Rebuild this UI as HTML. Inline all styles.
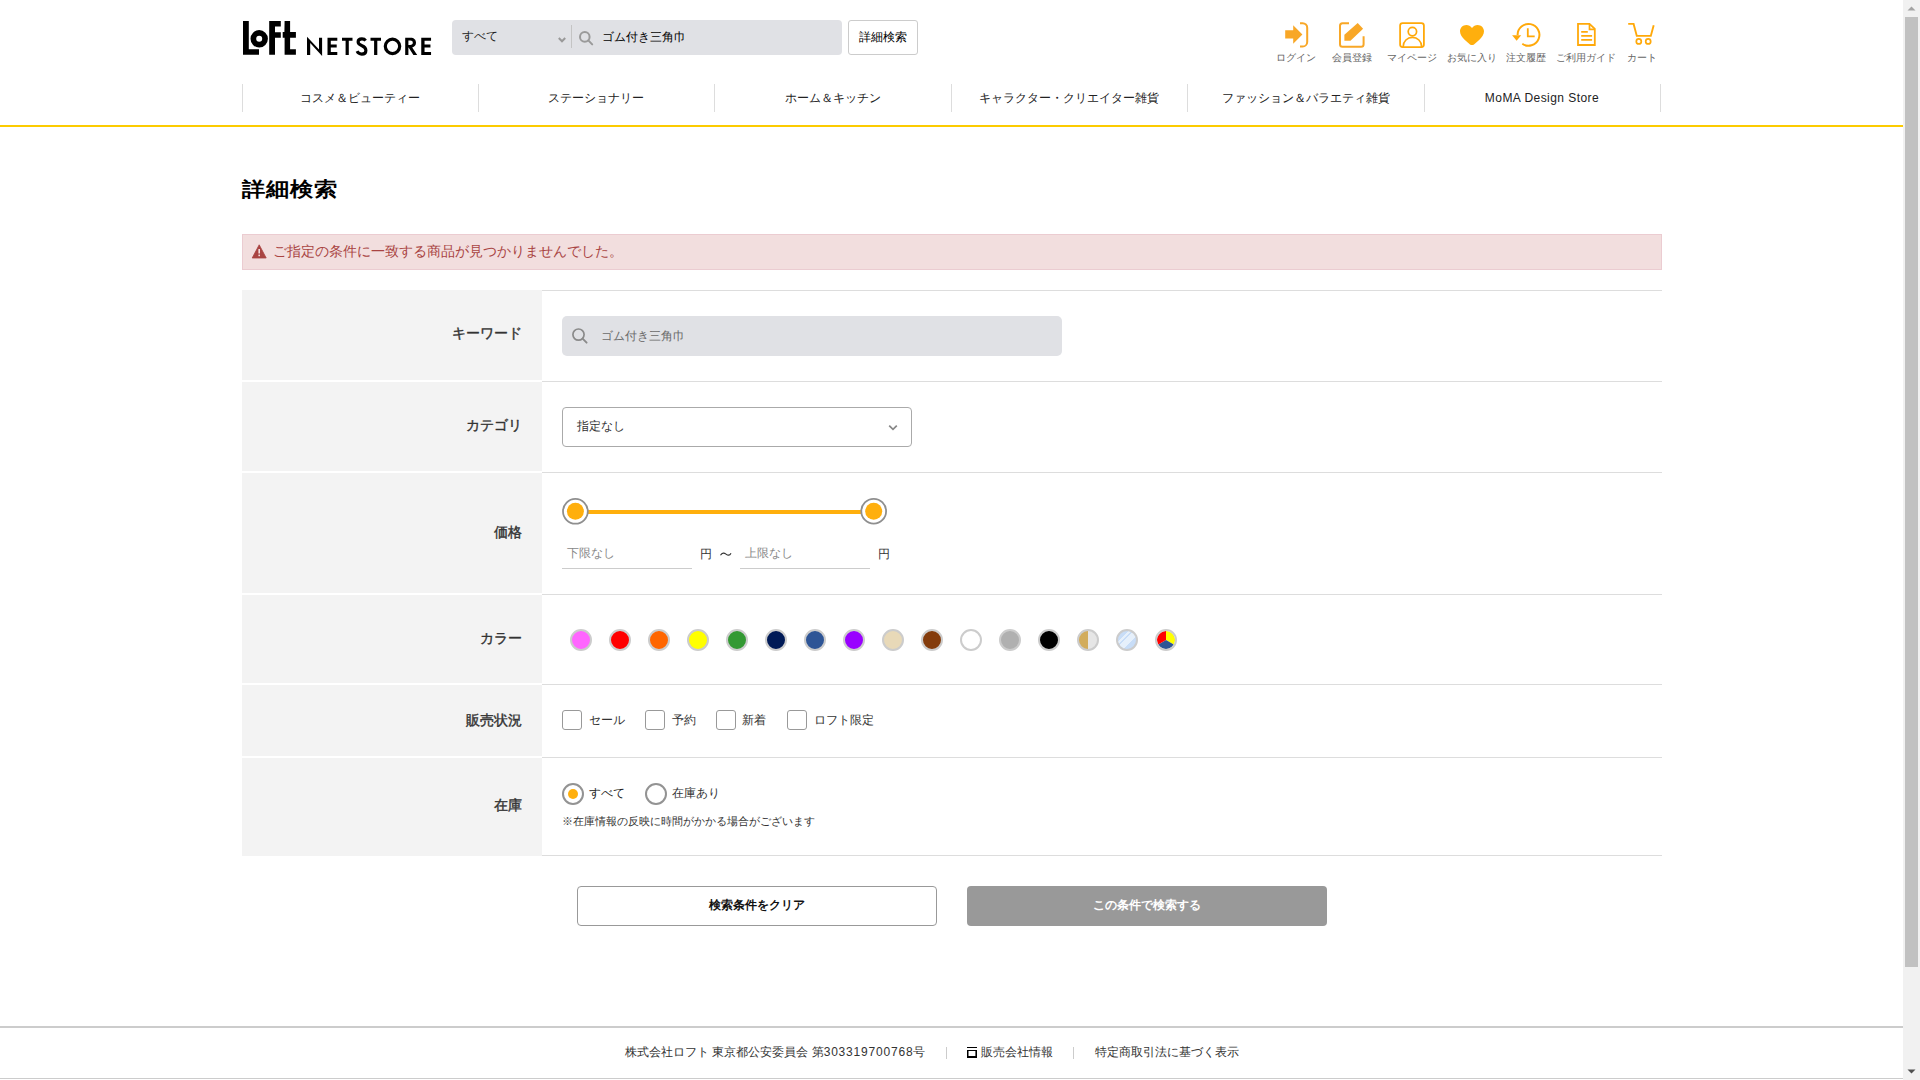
<!DOCTYPE html>
<html lang="ja"><head><meta charset="utf-8"><title>詳細検索 | ロフト公式通販サイト</title>
<style>
*{box-sizing:border-box;margin:0;padding:0}
html,body{width:1920px;height:1080px;overflow:hidden;background:#fff}
body{font-family:"Liberation Sans",sans-serif;color:#333;position:relative}
.a{position:absolute;white-space:nowrap}
#sb{position:absolute;left:1903px;top:0;width:17px;height:1080px;background:#f1f1f1}
#sb .th{position:absolute;left:2px;top:17px;width:13px;height:950px;background:#c1c1c1}
.nav{position:absolute;top:84px;height:28px;width:1px;background:#ddd}
.navt{position:absolute;top:88px;font-size:12px;line-height:20px;color:#222;text-align:center;width:236px}
.ic{position:absolute;top:20px}
.icl{position:absolute;top:50.5px;font-size:10px;line-height:14px;color:#666;text-align:center;width:80px}
.lbl{position:absolute;left:242px;width:280px;text-align:right;font-size:14px;font-weight:normal;-webkit-text-stroke:0.4px #333;color:#333;line-height:20px}
.rowbg{position:absolute;left:242px;width:300px;background:#f3f3f3}
.hl{position:absolute;left:542px;width:1120px;height:1px;background:#ddd}
.cb{position:absolute;top:710px;width:20px;height:20px;border:1px solid #999;border-radius:3px;background:#fff}
.cbt{position:absolute;top:710px;font-size:12px;line-height:20px;color:#333}
.sw{position:absolute;top:629px;width:22px;height:22px;border-radius:50%;border:2px solid #ccc}
</style></head><body>

<!-- header logo -->
<svg class="a" style="left:240px;top:18px" width="200" height="42" viewBox="240 18 200 42">
  <g fill="#000">
    <path d="M243 21h5.8v28.2h10.2v5.5H243z"/>
    <circle cx="259.2" cy="38.8" r="5.85" fill="none" stroke="#000" stroke-width="5.7"/>
    <path d="M269.2 21h11.6v5.5h-5.8v5.8h5.8v5.5h-5.8v16.9h-5.8z"/>
    <path d="M284.6 21h5.5v11.1h5.8v5.7h-5.8v11.4h5.8v5.5h-11.3V37.8h-1.9v-5.7h1.7z"/>
  </g>
  <g fill="#000">
    <path d="M307 55V36.8L319 49.6V37.7H322.1V55.9L310.2 43V55z"/>
    <path id="lE" d="M327.5 37.7H337.3V40.8H330.8V44.6H336.7V47.5H330.8V52H337.3V55H327.5z"/>
    <path d="M342 37.7H352.5V40.8H348.8V55H345.6V40.8H342z"/>
    <path d="M370.5 37.7H381V40.8H377.3V55H374.1V40.8H370.5z"/>
    <path d="M421.25 37.7H431.05V40.8H424.55V44.6H430.45V47.5H424.55V52H431.05V55H421.25z"/>
    <path fill-rule="evenodd" d="M405.2 55V37.7H410.6C414 37.7 416 39.7 416 42.7C416 45.2 414.5 46.9 412.2 47.4L417.2 55H413.4L408.6 47.6H408.4V55zM408.4 40.6V44.9H410.2C411.9 44.9 412.8 44.1 412.8 42.7C412.8 41.4 411.9 40.6 410.2 40.6z"/>
  </g>
  <path d="M365.6 40.6C364.7 39.2 363.4 38.9 361.9 38.9C359.7 38.9 358.1 40.1 358.1 42C358.1 44.1 360 44.9 362 45.7C364.3 46.6 365.9 47.7 365.9 50.4C365.9 52.7 364.2 54.1 361.7 54.1C359.5 54.1 357.9 53 357.1 51.2" fill="none" stroke="#000" stroke-width="3.1"/>
  <circle cx="392.5" cy="46.35" r="7.2" fill="none" stroke="#000" stroke-width="3.2"/>
</svg>

<!-- search bar -->
<div class="a" style="left:452px;top:20px;width:390px;height:35px;background:#e0e1e5;border-radius:4px"></div>
<div class="a" style="left:462px;top:26px;font-size:12px;line-height:20px;color:#222">すべて</div>
<svg class="a" style="left:556px;top:34px" width="12" height="10" viewBox="0 0 12 10"><path d="M2.8 4l3.2 3.3 3.2-3.3" fill="none" stroke="#999" stroke-width="2"/></svg>
<div class="a" style="left:571px;top:25px;width:1px;height:23px;background:#c4c4c4"></div>
<svg class="a" style="left:576px;top:28px" width="20" height="20" viewBox="0 0 20 20"><circle cx="8.8" cy="8.9" r="4.8" fill="none" stroke="#9a9a9a" stroke-width="2"/><path d="M12.3 12.4l3.9 4" stroke="#9a9a9a" stroke-width="2" stroke-linecap="round"/></svg>
<div class="a" style="left:602px;top:27px;font-size:12px;line-height:20px;color:#000">ゴム付き三角巾</div>
<div class="a" style="left:848px;top:20px;width:70px;height:35px;border:1px solid #ccc;border-radius:3px;background:#fff;font-size:12px;line-height:33px;text-align:center;color:#000">詳細検索</div>

<!-- header icons -->
<svg class="a" style="left:1270px;top:15px" width="400" height="36" viewBox="1270 15 400 36">
  <g fill="#f8a727">
    <path d="M1285.2 30.2h8v-4.9l9.2 9.2-9.2 9.2v-5.2h-8z"/>
  </g>
  <path d="M1300 23.2h2.6a4.6 4.6 0 0 1 4.6 4.6v14.1a4.6 4.6 0 0 1-4.6 4.6H1300" fill="none" stroke="#f8a727" stroke-width="2"/>
  <path d="M1349 23.2h-6.5a2.5 2.5 0 0 0-2.5 2.5v18.5a2.5 2.5 0 0 0 2.5 2.5h18.6a2.5 2.5 0 0 0 2.5-2.5v-7.9" fill="none" stroke="#f8a727" stroke-width="2"/>
  <path d="M1344.4 34.8l13.3-11.8 5.4 5.75-12.6 12.05h-6.1z" fill="#f8a727"/>
  <rect x="1400.1" y="23.1" width="23.8" height="24" rx="2.5" fill="none" stroke="#ffa90a" stroke-width="1.8"/>
  <circle cx="1412.4" cy="31.6" r="4.2" fill="none" stroke="#ffa90a" stroke-width="1.7"/>
  <path d="M1403.2 47.1v-0.6a9.2 9.2 0 0 1 18.4 0v0.6" fill="none" stroke="#ffa90a" stroke-width="1.7"/>
  <path d="M1472 28.1C1470.6 25.9 1468.6 24.9 1466.4 24.9C1462.8 24.9 1460 27.7 1460 31.3C1460 34.6 1462 37.2 1464.6 39.8L1470 44.4C1471.2 45.3 1472.8 45.3 1474 44.4L1479.4 39.8C1482 37.2 1484 34.6 1484 31.3C1484 27.7 1481.2 24.9 1477.6 24.9C1475.4 24.9 1473.4 25.9 1472 28.1z" fill="#ffaf0d"/>
  <path d="M1517.6 35A10.9 10.9 0 1 1 1522.3 43.8" fill="none" stroke="#ffa90a" stroke-width="2"/>
  <path d="M1512.1 35.3h9.1l-4.55 5.5z" fill="#ffa90a"/>
  <path d="M1527.8 28.2v8.1h6.9" fill="none" stroke="#ffa90a" stroke-width="1.8"/>
  <path d="M1578 23.9h11.5l5.3 5v16.1H1578z" fill="none" stroke="#ffa90a" stroke-width="1.8"/>
  <path d="M1589.5 23.9v5.4h5.3" fill="none" stroke="#ffa90a" stroke-width="1.7"/>
  <path d="M1581.2 31.9h6.6M1581.2 35.9h10.9M1581.2 39.9h10.9" stroke="#ffa90a" stroke-width="1.7"/>
  <path d="M1628.2 23.9h5.4l3.2 12h14l2.9-10.6" fill="none" stroke="#ffa90a" stroke-width="1.9"/>
  <circle cx="1638.8" cy="41.4" r="2.5" fill="none" stroke="#ffa90a" stroke-width="1.7"/>
  <circle cx="1648.2" cy="41.4" r="2.5" fill="none" stroke="#ffa90a" stroke-width="1.7"/>
</svg>
<div class="icl" style="left:1256px">ログイン</div>
<div class="icl" style="left:1311.5px">会員登録</div>
<div class="icl" style="left:1371.5px">マイページ</div>
<div class="icl" style="left:1432px">お気に入り</div>
<div class="icl" style="left:1486.4px">注文履歴</div>
<div class="icl" style="left:1546.4px">ご利用ガイド</div>
<div class="icl" style="left:1601.5px">カート</div>

<!-- nav -->
<div class="nav" style="left:242px"></div>
<div class="nav" style="left:478px"></div>
<div class="nav" style="left:714px"></div>
<div class="nav" style="left:951px"></div>
<div class="nav" style="left:1187px"></div>
<div class="nav" style="left:1424px"></div>
<div class="nav" style="left:1660px"></div>
<div class="navt" style="left:242px">コスメ＆ビューティー</div>
<div class="navt" style="left:478px">ステーショナリー</div>
<div class="navt" style="left:715px">ホーム＆キッチン</div>
<div class="navt" style="left:951px">キャラクター・クリエイター雑貨</div>
<div class="navt" style="left:1188px">ファッション＆バラエティ雑貨</div>
<div class="navt" style="left:1424px;letter-spacing:0.45px">MoMA Design Store</div>
<div class="a" style="left:0;top:125px;width:1903px;height:2px;background:#fccb00"></div>

<!-- title -->
<div class="a" style="left:242px;top:175.5px;font-size:23.5px;line-height:30px;font-weight:bold;color:#000;transform:scaleY(0.86);transform-origin:0 0">詳細検索</div>

<!-- alert -->
<div class="a" style="left:242px;top:234px;width:1420px;height:36px;background:#f2dede;border:1px solid #ebccd1"></div>
<svg class="a" style="left:250px;top:242px" width="20" height="18" viewBox="0 0 20 18"><path d="M9.2 2.8L2.2 16h14z" fill="#a94442" stroke="#a94442" stroke-width="0.8" stroke-linejoin="round"/><rect x="8.4" y="7" width="1.6" height="4.5" fill="#f2dede"/><rect x="8.4" y="12.6" width="1.6" height="1.6" fill="#f2dede"/></svg>
<div class="a" style="left:273px;top:241px;font-size:14px;line-height:20px;color:#a94442">ご指定の条件に一致する商品が見つかりませんでした。</div>

<!-- table rows -->
<div class="rowbg" style="top:290px;height:90px"></div>
<div class="rowbg" style="top:382px;height:89px"></div>
<div class="rowbg" style="top:473px;height:120px"></div>
<div class="rowbg" style="top:595px;height:88px"></div>
<div class="rowbg" style="top:685px;height:71px"></div>
<div class="rowbg" style="top:758px;height:98px"></div>
<div class="hl" style="top:290px"></div>
<div class="hl" style="top:381px"></div>
<div class="hl" style="top:472px"></div>
<div class="hl" style="top:594px"></div>
<div class="hl" style="top:684px"></div>
<div class="hl" style="top:757px"></div>
<div class="hl" style="top:855px"></div>

<div class="lbl" style="top:323px">キーワード</div>
<div class="lbl" style="top:415px">カテゴリ</div>
<div class="lbl" style="top:522px">価格</div>
<div class="lbl" style="top:628px">カラー</div>
<div class="lbl" style="top:710px">販売状況</div>
<div class="lbl" style="top:795px">在庫</div>

<!-- keyword -->
<div class="a" style="left:562px;top:316px;width:500px;height:40px;background:#e0e1e5;border-radius:5px"></div>
<svg class="a" style="left:568px;top:324px" width="24" height="24" viewBox="0 0 24 24"><circle cx="10.5" cy="10.6" r="5.6" fill="none" stroke="#8a8a8a" stroke-width="1.7"/><path d="M14.6 14.7l4 4" stroke="#8a8a8a" stroke-width="1.9" stroke-linecap="round"/></svg>
<div class="a" style="left:601px;top:326px;font-size:12px;line-height:20px;color:#6a6a6a">ゴム付き三角巾</div>

<!-- category -->
<div class="a" style="left:562px;top:407px;width:350px;height:40px;border:1px solid #aaa;border-radius:4px;background:#fff"></div>
<div class="a" style="left:577px;top:416px;font-size:12px;line-height:20px;color:#333">指定なし</div>
<svg class="a" style="left:887px;top:423px" width="12" height="10" viewBox="0 0 12 10"><path d="M2.2 2.6l3.8 3.8 3.8-3.8" fill="none" stroke="#888" stroke-width="1.7"/></svg>

<!-- price slider -->
<div class="a" style="left:588px;top:510px;width:274px;height:4px;background:#ffaf0d"></div>
<svg class="a" style="left:556px;top:492px" width="340" height="40" viewBox="556 492 340 40"><circle cx="575.4" cy="511.3" r="12.4" fill="#fff" stroke="#8f8f8f" stroke-width="1.8"/><circle cx="575.4" cy="511.3" r="8.5" fill="#ffaf0d"/><circle cx="873.7" cy="511.2" r="12.4" fill="#fff" stroke="#8f8f8f" stroke-width="1.8"/><circle cx="873.7" cy="511.2" r="8.5" fill="#ffaf0d"/></svg>



<div class="a" style="left:562px;top:568px;width:130px;height:1px;background:#ccc"></div>
<div class="a" style="left:740px;top:568px;width:130px;height:1px;background:#ccc"></div>
<div class="a" style="left:567px;top:543px;font-size:12px;line-height:20px;color:#888">下限なし</div>
<div class="a" style="left:745px;top:543px;font-size:12px;line-height:20px;color:#888">上限なし</div>
<div class="a" style="left:700px;top:544px;font-size:12px;line-height:20px;color:#333">円</div>
<svg class="a" style="left:716px;top:548px" width="20" height="12" viewBox="716 548 20 12"><path d="M720.5 555.3C722.2 552.6 724.2 552.7 726 554.1C727.8 555.5 729.6 555.9 731 553.2" fill="none" stroke="#333" stroke-width="1.15"/></svg>
<div class="a" style="left:878px;top:544px;font-size:12px;line-height:20px;color:#333">円</div>

<!-- colors -->
<div class="sw" style="left:570px;background:#ff66ff"></div>
<div class="sw" style="left:609px;background:#ff0000"></div>
<div class="sw" style="left:648px;background:#ff6600"></div>
<div class="sw" style="left:687px;background:#ffff00"></div>
<div class="sw" style="left:726px;background:#339933"></div>
<div class="sw" style="left:765px;background:#001a57"></div>
<div class="sw" style="left:804px;background:#2e5596"></div>
<div class="sw" style="left:843px;background:#9900ff"></div>
<div class="sw" style="left:882px;background:#e8d9b8"></div>
<div class="sw" style="left:921px;background:#843c0c"></div>
<div class="sw" style="left:960px;background:#ffffff"></div>
<div class="sw" style="left:999px;background:#b0b0b0"></div>
<div class="sw" style="left:1038px;background:#000000"></div>
<div class="sw" style="left:1077px;background:linear-gradient(90deg,#d2ac5c 50%,#e6e6e6 50%)"></div>
<div class="sw" style="left:1116px;background:linear-gradient(135deg,#c8ddf7 30%,#e6f0fb 30%,#e6f0fb 38%,#c8ddf7 38%,#c8ddf7 44%,#e6f0fb 44%,#e6f0fb 66%,#c8ddf7 66%)"></div>
<svg class="a" style="left:1155px;top:629px" width="22" height="22" viewBox="0 0 22 22"><path d="M11 11V2A9 9 0 0 1 18.794 15.5z" fill="#ffff00"/><path d="M11 11L18.794 15.5A9 9 0 0 1 3.206 15.5z" fill="#2e5596"/><path d="M11 11L3.206 15.5A9 9 0 0 1 11 2z" fill="#ff0000"/><circle cx="11" cy="11" r="10" fill="none" stroke="#ccc" stroke-width="2"/></svg>

<!-- status checkboxes -->
<div class="cb" style="left:562px"></div><div class="cbt" style="left:589px">セール</div>
<div class="cb" style="left:645px"></div><div class="cbt" style="left:672px">予約</div>
<div class="cb" style="left:716px"></div><div class="cbt" style="left:742px">新着</div>
<div class="cb" style="left:787px"></div><div class="cbt" style="left:814px">ロフト限定</div>

<!-- stock radios -->
<div class="a" style="left:562px;top:783px;width:22px;height:22px;border-radius:50%;border:2px solid #939393;background:#fff"></div>
<div class="a" style="left:568px;top:789px;width:10px;height:10px;border-radius:50%;background:#ffaf0d"></div>
<div class="a" style="left:589px;top:783px;font-size:12px;line-height:20px;color:#222">すべて</div>
<div class="a" style="left:645px;top:783px;width:22px;height:22px;border-radius:50%;border:2px solid #939393;background:#fff"></div>
<div class="a" style="left:672px;top:783px;font-size:12px;line-height:20px;color:#333">在庫あり</div>
<div class="a" style="left:562px;top:812px;font-size:10.5px;line-height:18px;color:#333">※在庫情報の反映に時間がかかる場合がございます</div>

<!-- buttons -->
<div class="a" style="left:577px;top:886px;width:360px;height:40px;border:1px solid #999;border-radius:4px;background:#fff;text-align:center;font-size:12px;line-height:37px;font-weight:bold;color:#111">検索条件をクリア</div>
<div class="a" style="left:967px;top:886px;width:360px;height:40px;border-radius:4px;background:#999;text-align:center;font-size:12px;line-height:39px;font-weight:bold;color:#fff">この条件で検索する</div>

<!-- footer -->
<div class="a" style="left:0;top:1026px;width:1903px;height:2px;background:#ccc"></div>
<div class="a" style="left:0;top:1078px;width:1903px;height:1px;background:#ccc"></div>
<div class="a" style="left:625px;top:1042px;font-size:12px;line-height:20px;color:#333">株式会社ロフト 東京都公安委員会 第<span style="letter-spacing:0.8px">303319700768</span>号</div>
<div class="a" style="left:946px;top:1047px;width:1px;height:12px;background:#ccc"></div>
<svg class="a" style="left:966px;top:1046px" width="12" height="13" viewBox="966 1046 12 13"><g fill="#000"><rect x="967" y="1047" width="10" height="1"/><rect x="967" y="1050" width="10" height="1"/><rect x="967" y="1050" width="1.5" height="8"/><rect x="975.4" y="1050" width="1.6" height="8"/><rect x="967" y="1056" width="10" height="2"/></g></svg>
<div class="a" style="left:981px;top:1042px;font-size:12px;line-height:20px;color:#333">販売会社情報</div>
<div class="a" style="left:1073px;top:1047px;width:1px;height:12px;background:#ccc"></div>
<div class="a" style="left:1095px;top:1042px;font-size:12px;line-height:20px;color:#333">特定商取引法に基づく表示</div>

<!-- scrollbar -->
<div id="sb"><div class="th"></div>
<svg class="a" style="left:0;top:0" width="17" height="17"><path d="M4.5 10.5h8l-4-4z" fill="#a3a3a3"/></svg>
<svg class="a" style="left:0;top:1063px" width="17" height="17"><path d="M4.5 6.5h8l-4 4z" fill="#505050"/></svg>
</div>
</body></html>
